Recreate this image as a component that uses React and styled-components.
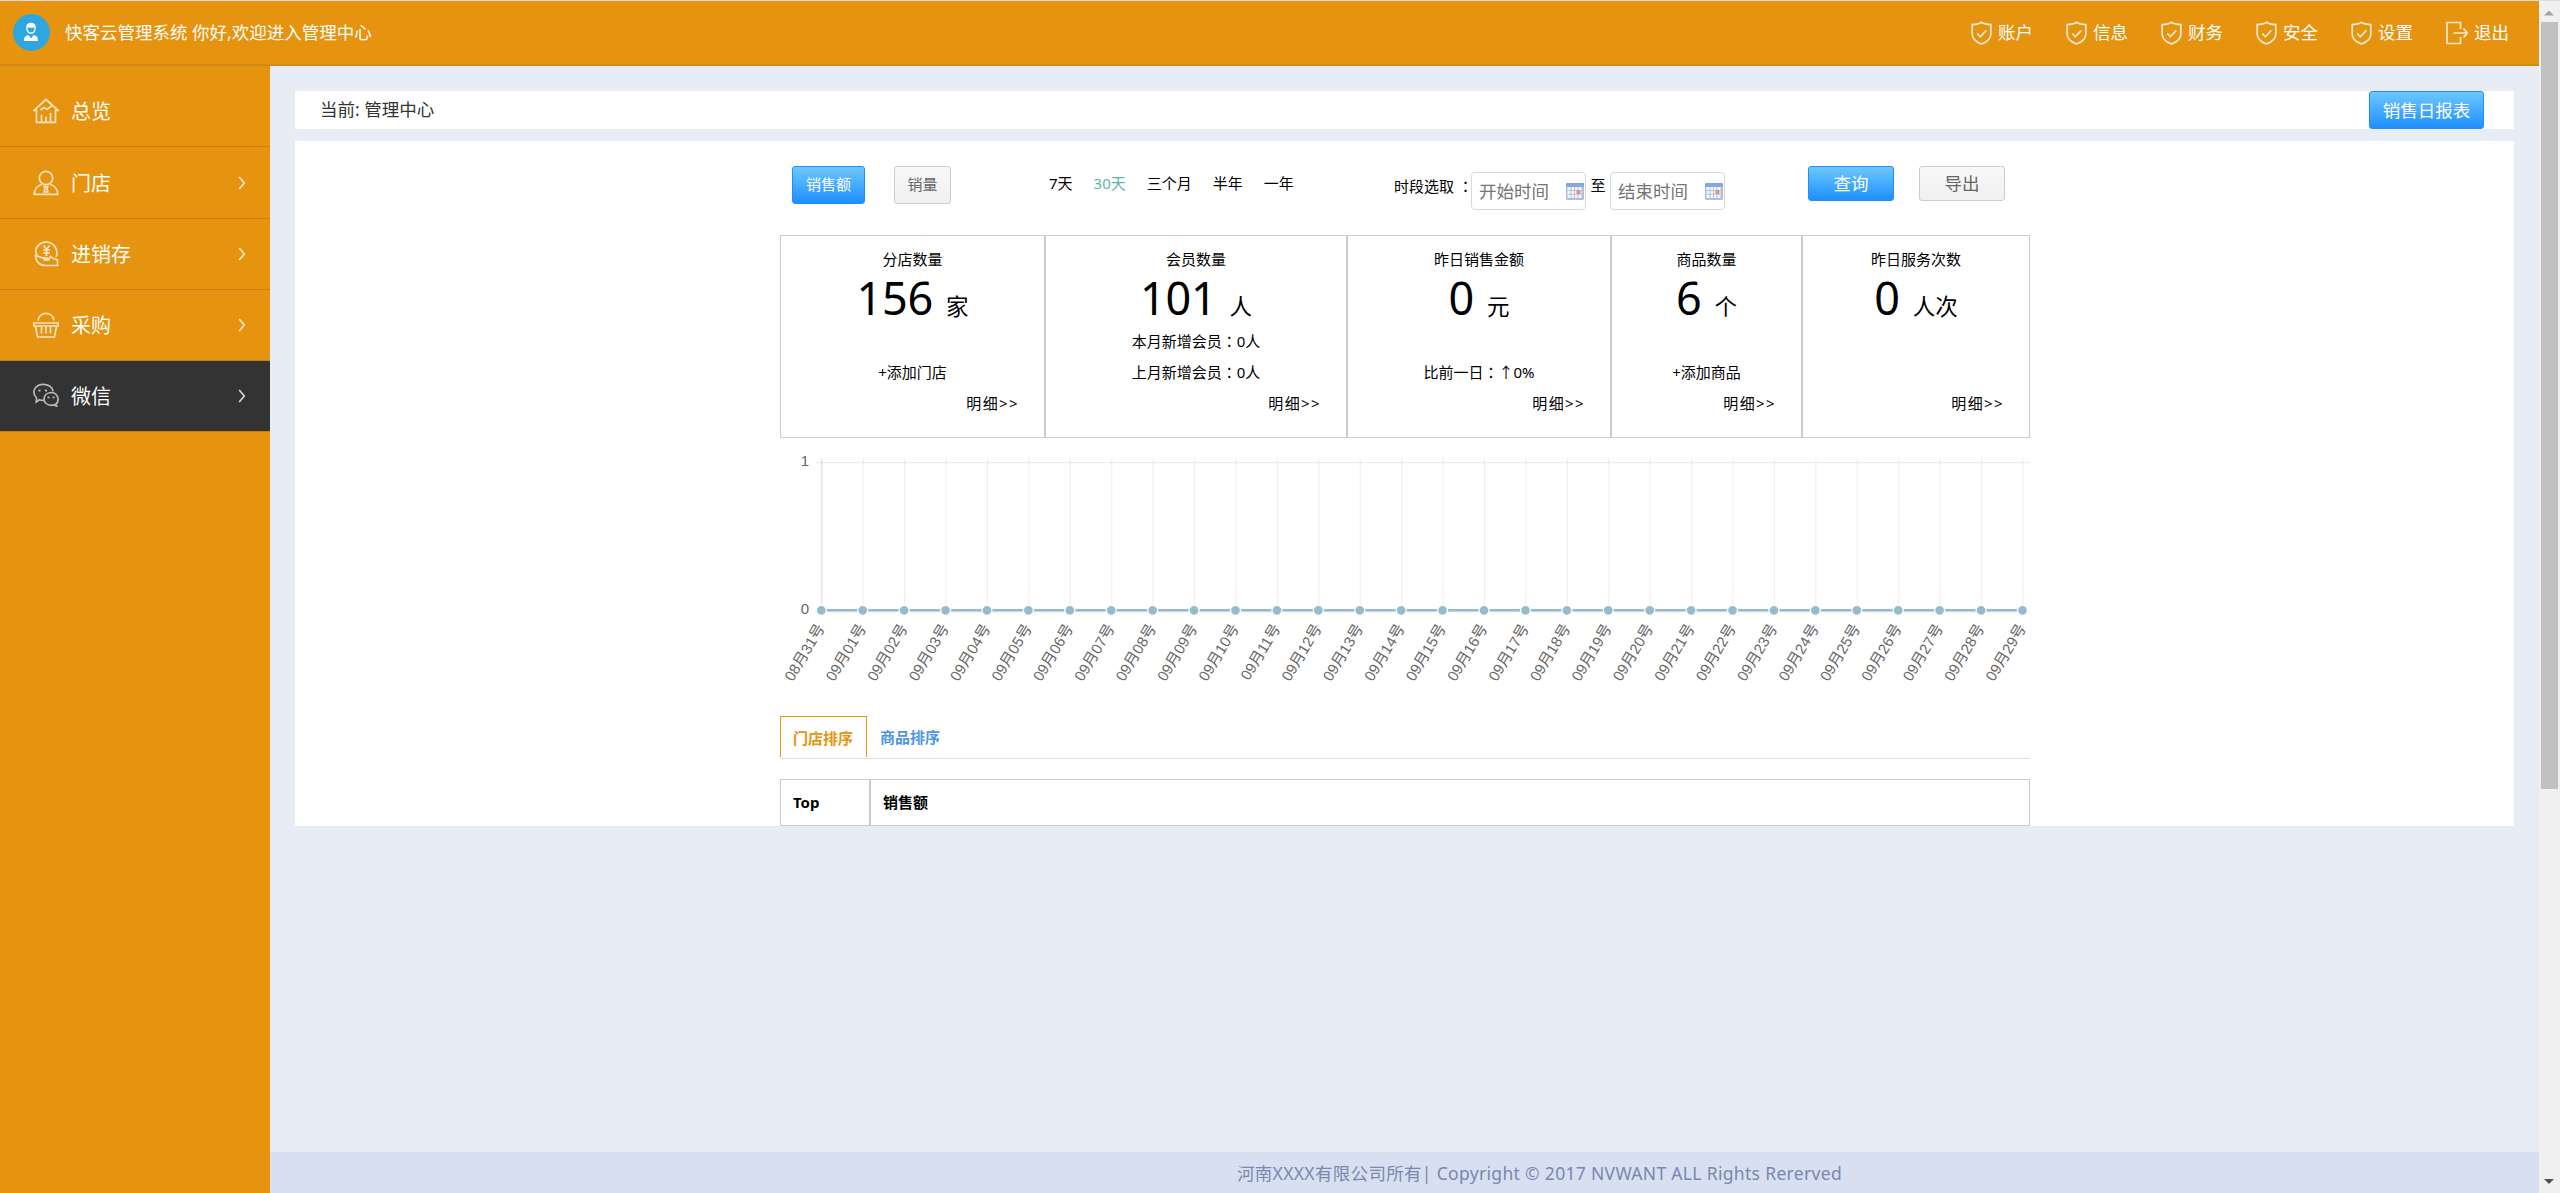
import React from 'react';
import styled, { createGlobalStyle } from 'styled-components';

const GlobalStyle = createGlobalStyle`
  * {
    box-sizing: border-box;
  }
  body {
    margin: 0;
    background: #e8edf5;
    color: #000;
    font-family: 'Noto Sans', 'Noto Sans CJK SC', sans-serif;
    font-size: 15px;
    overflow: hidden;
  }
`;

const Page = styled.div`
  display: flex;
  width: 2560px;
  height: 1193px;
  border-top: 1px solid #dcdcdc;
`;
const Shell = styled.div`
  flex: 1;
  display: flex;
  flex-direction: column;
`;

const Header = styled.header`
  display: flex;
  align-items: center;
  justify-content: space-between;
  height: 65px;
  padding: 0 31px 0 13px;
  background: #e6930f;
  border-bottom: 2px solid #d38a19;
  color: #fff;
  font-size: 17.5px;
`;
const Brand = styled.div`
  display: flex;
  align-items: center;
  gap: 15px;
`;
const HeaderText = styled.span`
  padding-bottom: 2px;
  line-height: 24px;
  white-space: nowrap;
`;
const TopNav = styled.nav`
  display: flex;
  gap: 33px;
`;
const TopLink = styled.a`
  display: flex;
  align-items: center;
  gap: 6px;
  width: 62px;
`;

const Body = styled.div`
  flex: 1;
  display: flex;
`;
const Sidebar = styled.aside`
  width: 270px;
  padding-top: 9px;
  background: #e6930f;
`;
const MenuItem = styled.a`
  display: flex;
  align-items: center;
  height: ${props => props.height}px;
  padding: 0 24px 0 33px;
  border-bottom: 1px solid #c88111;
  background: ${props => (props.active ? '#333' : 'transparent')};
  color: #fff;
  font-size: 20px;
`;
const MenuText = styled.span`
  flex: 1;
  padding: 2px 0 0 12px;
  line-height: 28px;
`;

const Main = styled.main`
  flex: 1;
  display: flex;
  flex-direction: column;
`;
const Content = styled.div`
  flex: 1;
  padding: 25px 25px 0;
`;
const Crumbs = styled.div`
  display: flex;
  align-items: center;
  justify-content: space-between;
  height: 38px;
  margin-bottom: 12px;
  padding: 0 30px 0 25px;
  background: #fff;
  color: #333;
  font-size: 17.5px;
`;
const CrumbText = styled.span`
  padding-bottom: 3px;
`;
const Panel = styled.section`
  height: 685px;
  padding: 25px 484px 0 485px;
  background: #fff;
`;

const Button = styled.button`
  width: ${props => props.width}px;
  height: ${props => props.height || 38}px;
  padding: 0 0 ${props => (props.small ? 3 : 2)}px;
  border: 1px solid ${props => (props.primary ? '#1e8fff' : '#ccc')};
  border-radius: 3px;
  background: ${props =>
    props.primary
      ? 'linear-gradient(#6cc8ff, #1e8fff)'
      : 'linear-gradient(#f8f8f8, #f0f0f0)'};
  color: ${props => (props.primary ? '#fff' : '#666')};
  font-family: inherit;
  font-size: ${props => (props.small ? 15 : 17.5)}px;
  white-space: nowrap;
`;

const Toolbar = styled.div`
  display: flex;
  align-items: flex-start;
  height: 69px;
  padding-left: 12px;
`;
const Measures = styled.div`
  display: flex;
  gap: 29px;
  width: 257px;
`;
const Ranges = styled.div`
  display: flex;
  gap: 21px;
  width: 345px;
  line-height: 35px;
`;
const Range = styled.a`
  color: ${props => (props.active ? '#5fb5a5' : '#000')};
`;
const Period = styled.div`
  display: flex;
  width: 414px;
  line-height: 39px;
`;
const PeriodLabel = styled.span`
  width: 77px;
  white-space: nowrap;
`;
const To = styled.span`
  width: 24px;
  text-align: center;
`;
const DateField = styled.div`
  display: flex;
  align-items: center;
  justify-content: space-between;
  width: 115px;
  height: 38px;
  margin-top: 6px;
  padding: 0 1px 0 7px;
  border: 1px solid #d8d8d8;
  border-radius: 4px;
  color: #757575;
  font-size: 17.5px;
  line-height: 36px;
`;
const Actions = styled.div`
  display: flex;
  gap: 25px;
`;
// The traditional face keeps the full-width colon in the middle of its cell
const Colon = styled.span`
  font-family: 'Noto Sans CJK TC', sans-serif;
`;

const Cards = styled.div`
  display: flex;
`;
const Card = styled.div`
  width: ${props => props.width}px;
  height: 203px;
  padding-top: 8px;
  border: 1px solid #ccc;
  text-align: center;
`;
const Line = styled.div`
  height: 31px;
  line-height: 30px;
`;
const More = styled(Line)`
  padding-right: 25px;
  text-align: right;
  letter-spacing: 1.4px;
`;
const Figure = styled.div`
  height: 51px;
  line-height: 46px;
  font-size: 45px;
  letter-spacing: -0.2px;
`;
const Unit = styled.span`
  margin-left: 13px;
  font-size: 22.5px;
  letter-spacing: 0;
`;
const Trend = styled.span`
  letter-spacing: -2px;
`;

const ChartSvg = styled.svg`
  display: block;
  width: 1250px;
  height: 278px;
  fill: #666;

  text {
    font-family: 'Liberation Sans', 'Noto Sans CJK SC', sans-serif;
    font-size: 15px;
  }
`;

const Tabs = styled.div`
  display: flex;
  height: 43px;
  border-bottom: 1px solid #ddd;
`;
const Tab = styled.a`
  width: 87px;
  height: 41px;
  padding: 0 12px;
  border: 1px solid ${props => (props.active ? '#e6930f' : 'transparent')};
  border-bottom: 0;
  color: ${props => (props.active ? '#e6930f' : '#4f96df')};
  font-weight: 700;
  line-height: ${props => (props.active ? 42 : 40)}px;
`;
const Table = styled.div`
  display: flex;
  margin-top: 20px;
`;
const HeadCell = styled.div`
  flex: ${props => (props.width ? `0 0 ${props.width}px` : 1)};
  height: 47px;
  padding-left: 12px;
  border: 1px solid #ccc;
  font-weight: 700;
  line-height: 44px;
`;

const Footer = styled.footer`
  height: 41px;
  padding-left: 270px;
  background: #d8dff0;
  color: #7888ae;
  font-size: 17.5px;
  line-height: 42px;
  letter-spacing: 0.32px;
  text-align: center;
`;

const Scrollbar = styled.div`
  display: flex;
  flex-direction: column;
  align-items: center;
  width: 21px;
  padding: 9px 1px 8px 0;
  background: #f0f0f0;
`;
const Thumb = styled.div`
  width: 17px;
  height: 767px;
  margin: 6px 0 auto;
  background: #c1c1c1;
`;

const Stroke = styled.svg`
  display: block;
  flex: none;
  fill: none;
  stroke: #fff;
  stroke-width: 1.7;
  opacity: ${props => props.$fade || 0.8};
`;

const Avatar = () => (
  <svg width="37" height="37" viewBox="0 0 37 37">
    <circle cx="18.5" cy="18.5" r="18.5" fill="#2ea7e0" />
    <path
      d="M13.3 12.5c0-5 9.4-5 9.4 0v2c0 7-9.4 7-9.4 0z M14.6 13.2c2 .8 5 .8 6.8 0v1.5c0 5-6.8 5-6.8 0z"
      fill="#fff"
      fillRule="evenodd"
    />
    <path d="M11 27c0-4 1-5 4.5-6l2.5 3.5 2.5-3.5c3.500 1 4.500 2 4.500 6z" fill="#fff" />
  </svg>
);

const Shield = () => (
  <Stroke width="21" height="24" viewBox="0 0 21 24">
    <path d="M10.500 1.200C8 3 4.500 3.500 1.200 3.600V13c0 5 5 8.500 9.300 10 4.300-1.500 9.300-5 9.300-10V3.600C16.500 3.500 13 3 10.500 1.200z" />
    <path d="M6.300 12.500l3 3.300 6-6.500" />
  </Stroke>
);

const Logout = () => (
  <Stroke width="22" height="24" viewBox="0 0 22 24">
    <path d="M14.500 8V1.500H1v21h13.500V16M7.500 12H21M17.500 7.500L21.300 12l-3.800 4.500" />
  </Stroke>
);

const menuIcons = {
  house: (
    <>
      <path d="M1 12.300L13 1.500l12 10.800h-2.500V24.300H3.500V12.300z" />
      <path d="M7.500 12l3.500-2.500 3 2L18.500 8M8.500 24v-7.500M13 24v-5.500M17.500 24v-9" />
    </>
  ),
  user: (
    <>
      <circle cx="13" cy="8" r="6.700" />
      <path d="M9 14.500C4.500 15.500 1.500 19.500 1.200 24.300h23.600C24.500 19.500 21.500 15.500 17 14.500M11.300 16.500h3.400l-.6 2 .6 3.500h-3.400l.6-3.500z" />
    </>
  ),
  money: (
    <>
      <path d="M4 14C0 7 7 1 13.500 1.200 21 1.500 26 9 23 16" />
      <path d="M10.500 4.500l3 4 3-4M10 9h7M10 12h7M13.500 8.500V15" />
      <path d="M2.500 14.500c2 0 4.500 2.300 7 2.300 3-.3 6 .2 6 2.200h-5M15.500 19l2-3.500c2 2 4 3 7 3.300v5.700H13C6 24.500 2.500 20 2.500 14.500z" />
    </>
  ),
  basket: (
    <>
      <path d="M5 8.500C6.500-1 19.500-1 21 8.500M.8 11h24.400v3H.8zM2.500 14.300L4.500 25h17l2-10.700" />
      <path d="M8.500 15v6.500M13 15v6.500M17.500 15v6.500" />
    </>
  ),
  wechat: (
    <>
      <path d="M11 17.200c-2 .4-3.500 0-4.500-.5L3.200 19l.4-4C-1.500 10 1 2 9.500 1.300 15 1 19.500 4 20 8.300" />
      <path d="M22.500 21.500c5-4 2-12-4.500-12-9 .5-9.500 12 0 12.800 1 0 2-.1 3-.4l3.300 1.600z" />
      <path d="M6.500 6.500v2M13 6.500v2M15.500 13.500v1.800M20.500 13.500v1.800" strokeWidth="2" />
    </>
  )
};

const Arrow = () => (
  <Stroke width="8" height="14" viewBox="0 0 8 14">
    <path d="M1.200 1L6.300 7l-5.100 6" />
  </Stroke>
);

const Calendar = () => (
  <svg width="18" height="18" viewBox="0 0 18 18">
    <rect x="0" y="1" width="18" height="17" rx="1.500" fill="#aebedb" />
    <rect x="0" y="1" width="18" height="4" rx="1" fill="#86a6df" />
    <rect x="1.500" y="5" width="14" height="11" fill="#f3f6fc" />
    <path d="M5 5v11M8.500 5v11M12 5v11M1.500 8.500h14M1.500 12.300h14" stroke="#b3c3e2" />
    <rect x="10.500" y="8" width="4" height="4" fill="#ee8d78" />
  </svg>
);

const Triangle = ({ down }) => (
  <svg width="10" height="6" viewBox="0 0 10 6">
    <path d={down ? 'M0 0h10L5 5z' : 'M0 5.500h10L5 .5z'} fill={down ? '#505050' : '#a3a3a3'} />
  </svg>
);

const topLinks = ['账户', '信息', '财务', '安全', '设置'];

const menu = [
  { text: '总览', icon: 'house', height: 72 },
  { text: '门店', icon: 'user', height: 72, more: true },
  { text: '进销存', icon: 'money', height: 71, more: true },
  { text: '采购', icon: 'basket', height: 71, more: true },
  { text: '微信', icon: 'wechat', height: 71, more: true, active: true }
];

const ranges = ['7天', '30天', '三个月', '半年', '一年'];

const cards = [
  { title: '分店数量', value: 156, unit: '家', width: 265, second: '+添加门店' },
  {
    title: '会员数量',
    value: 101,
    unit: '人',
    width: 302,
    first: <>本月新增会员<Colon>：</Colon>0人</>,
    second: <>上月新增会员<Colon>：</Colon>0人</>
  },
  {
    title: '昨日销售金额',
    value: 0,
    unit: '元',
    width: 264,
    second: <>比前一日<Colon>：</Colon><Trend>↑ </Trend>0%</>
  },
  { title: '商品数量', value: 6, unit: '个', width: 191, second: '+添加商品' },
  { title: '昨日服务次数', value: 0, unit: '人次', width: 228 }
];

const days = ['08月31号'];
for (let i = 1; i < 30; i++) {
  days.push(`09月${String(i).padStart(2, '0')}号`);
}

const Chart = () => {
  const x = i => 41.3 + i * 41.42;
  return (
    <ChartSvg viewBox="0 0 1250 278">
      <path d="M35 24.500H1250M35 173.500H1250" stroke="#000" strokeOpacity=".07" strokeWidth="1.250" />
      {days.map((day, i) => (
        <path
          key={day}
          d={`M${x(i) + 0.5} 20V178`}
          stroke="#000"
          strokeOpacity={i === 0 ? 0.12 : 0.06}
          strokeWidth="1.250"
        />
      ))}
      <text x="29" y="28" textAnchor="end">1</text>
      <text x="29" y="176" textAnchor="end">0</text>
      <path d={`M${x(0)} 172.300H${x(29)}`} stroke="#97bbcd" strokeWidth="2.500" />
      {days.map((day, i) => (
        <g key={day}>
          <circle cx={x(i)} cy="172.300" r="5" fill="#97bbcd" stroke="#fff" strokeWidth="1.250" />
          <text textAnchor="end" transform={`translate(${x(i) + 4} 190) rotate(-59)`}>
            {day}
          </text>
        </g>
      ))}
    </ChartSvg>
  );
};

export default () => {
  return (
    <Page>
      <GlobalStyle />
      <Shell>
        <Header>
          <Brand>
            <Avatar />
            <HeaderText>快客云管理系统 你好,欢迎进入管理中心</HeaderText>
          </Brand>
          <TopNav>
            {topLinks.map(text => (
              <TopLink key={text}>
                <Shield />
                <HeaderText>{text}</HeaderText>
              </TopLink>
            ))}
            <TopLink>
              <Logout />
              <HeaderText>退出</HeaderText>
            </TopLink>
          </TopNav>
        </Header>
        <Body>
          <Sidebar>
            {menu.map(item => (
              <MenuItem key={item.text} height={item.height} active={item.active}>
                <Stroke width="26" height="26" viewBox="0 0 26 26" $fade={item.active ? 0.65 : 0.75}>
                  {menuIcons[item.icon]}
                </Stroke>
                <MenuText>{item.text}</MenuText>
                {item.more && <Arrow />}
              </MenuItem>
            ))}
          </Sidebar>
          <Main>
            <Content>
              <Crumbs>
                <CrumbText>当前: 管理中心</CrumbText>
                <Button primary width={115}>销售日报表</Button>
              </Crumbs>
              <Panel>
                <Toolbar>
                  <Measures>
                    <Button primary small width={73}>销售额</Button>
                    <Button small width={57}>销量</Button>
                  </Measures>
                  <Ranges>
                    {ranges.map(text => (
                      <Range key={text} active={text === '30天'}>{text}</Range>
                    ))}
                  </Ranges>
                  <Period>
                    <PeriodLabel>时段选取 <Colon>：</Colon></PeriodLabel>
                    <DateField>开始时间<Calendar /></DateField>
                    <To>至</To>
                    <DateField>结束时间<Calendar /></DateField>
                  </Period>
                  <Actions>
                    <Button primary width={86} height={35}>查询</Button>
                    <Button width={86} height={35}>导出</Button>
                  </Actions>
                </Toolbar>
                <Cards>
                  {cards.map(card => (
                    <Card key={card.title} width={card.width}>
                      <Line>{card.title}</Line>
                      <Figure>
                        {card.value}
                        <Unit>{card.unit}</Unit>
                      </Figure>
                      <Line>{card.first}</Line>
                      <Line>{card.second}</Line>
                      <More>明细&gt;&gt;</More>
                    </Card>
                  ))}
                </Cards>
                <Chart />
                <Tabs>
                  <Tab active>门店排序</Tab>
                  <Tab>商品排序</Tab>
                </Tabs>
                <Table>
                  <HeadCell width={90}>Top</HeadCell>
                  <HeadCell>销售额</HeadCell>
                </Table>
              </Panel>
            </Content>
            <Footer>河南XXXX有限公司所有| Copyright © 2017 NVWANT ALL Rights Rererved</Footer>
          </Main>
        </Body>
      </Shell>
      <Scrollbar>
        <Triangle />
        <Thumb />
        <Triangle down />
      </Scrollbar>
    </Page>
  );
};
